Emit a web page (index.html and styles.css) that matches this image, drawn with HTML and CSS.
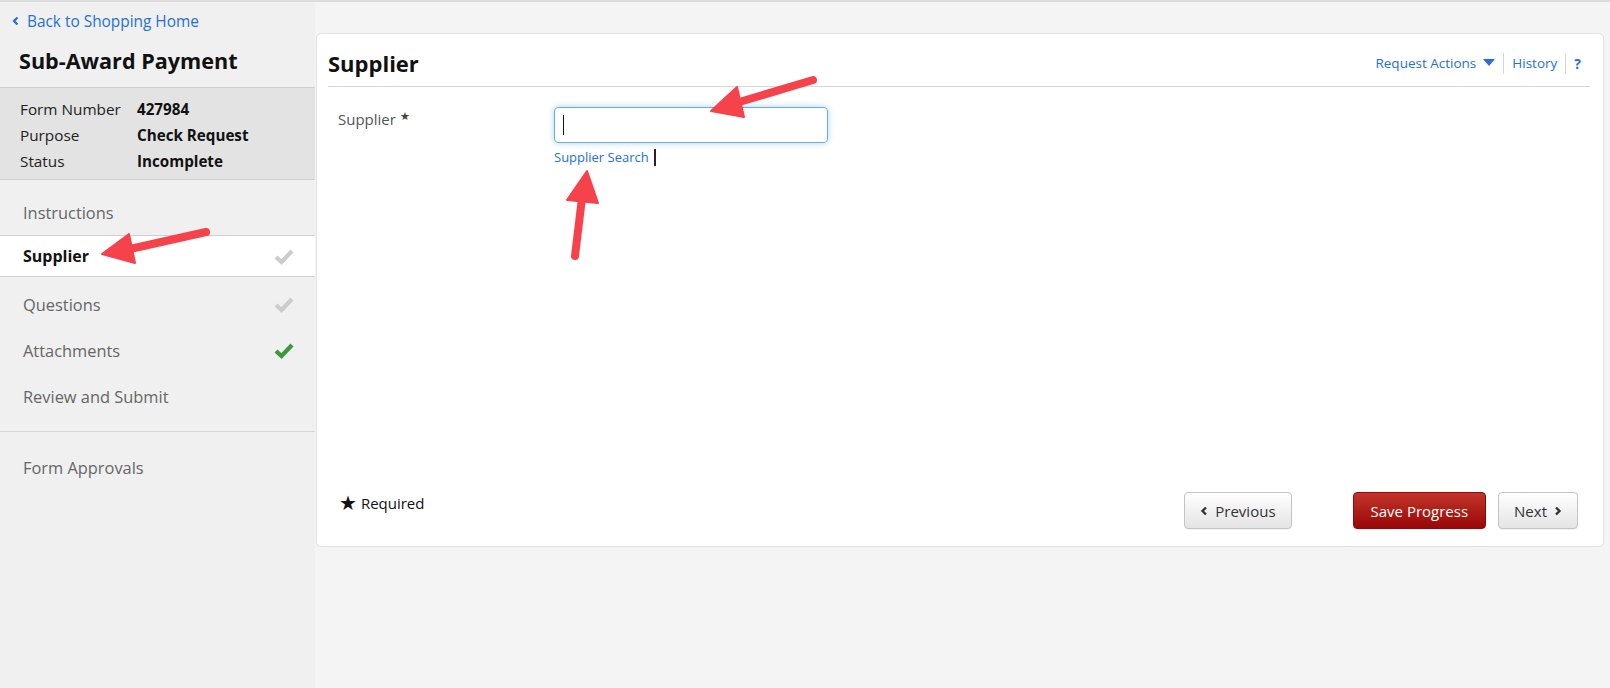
FILE: index.html
```html
<!DOCTYPE html>
<html lang="en">
<head>
    <meta charset="UTF-8">
    <meta name="viewport" content="width=device-width, initial-scale=1.0">
    <title>Sub-Award Payment - Supplier</title>
    <link rel="stylesheet" href="styles.css">
</head>
<body>
    <div class="page">
        <div class="sidebar">
            <a class="back-link" href="#">
                <svg class="chev" width="7" height="10" viewBox="0 0 7 10"><path d="M5.5 1.5 L2 5 L5.5 8.5" fill="none" stroke="currentColor" stroke-width="2.2"/></svg>
                Back to Shopping Home
            </a>
            <h1 class="form-title">Sub-Award Payment</h1>
            <div class="form-info">
                <div class="info-row"><span class="info-label">Form Number</span><span class="info-value">427984</span></div>
                <div class="info-row"><span class="info-label">Purpose</span><span class="info-value">Check Request</span></div>
                <div class="info-row"><span class="info-label">Status</span><span class="info-value">Incomplete</span></div>
            </div>
            <div class="nav-group">
                <div class="nav-item">Instructions</div>
                <div class="nav-item active">Supplier
                    <svg class="check" width="20" height="17" viewBox="0 0 20 17"><path d="M2 9 L7.5 14 L18 3" fill="none" stroke="#cccccc" stroke-width="4.2"/></svg>
                </div>
                <div class="nav-item">Questions
                    <svg class="check" width="20" height="17" viewBox="0 0 20 17"><path d="M2 9 L7.5 14 L18 3" fill="none" stroke="#cccccc" stroke-width="4.2"/></svg>
                </div>
                <div class="nav-item">Attachments
                    <svg class="check" width="20" height="17" viewBox="0 0 20 17"><path d="M2 9 L7.5 14 L18 3" fill="none" stroke="#3a9a3a" stroke-width="4.2"/></svg>
                </div>
                <div class="nav-item">Review and Submit</div>
            </div>
            <div class="nav-group last">
                <div class="nav-item">Form Approvals</div>
            </div>
        </div>

        <div class="main">
            <div class="card">
                <div class="card-header">
                    <h2 class="card-title">Supplier</h2>
                    <div class="header-links">
                        <a href="#" class="hlink">Request Actions
                            <svg width="12" height="8" viewBox="0 0 12 8"><path d="M0 0 L12 0 L6 7 Z" fill="currentColor"/></svg>
                        </a>
                        <span class="hsep"></span>
                        <a href="#" class="hlink">History</a>
                        <span class="hsep"></span>
                        <a href="#" class="hlink help">?</a>
                    </div>
                </div>

                <div class="form-row">
                    <div class="field-label">Supplier <span class="req">&#9733;</span></div>
                    <div class="field">
                        <div class="text-input"><span class="caret"></span></div>
                        <div class="field-links">
                            <a href="#" class="small-link">Supplier Search</a>
                            <span class="bar"></span>
                        </div>
                    </div>
                </div>

                <div class="card-footer">
                    <div class="required-note"><span class="req-star">&#9733;</span> Required</div>
                    <div class="buttons">
                        <button class="btn">
                            <svg width="8" height="10" viewBox="0 0 8 10"><path d="M6 1.5 L2.5 5 L6 8.5" fill="none" stroke="currentColor" stroke-width="2.4"/></svg>
                            Previous
                        </button>
                        <button class="btn btn-save">Save Progress</button>
                        <button class="btn">Next
                            <svg width="8" height="10" viewBox="0 0 8 10"><path d="M2 1.5 L5.5 5 L2 8.5" fill="none" stroke="currentColor" stroke-width="2.4"/></svg>
                        </button>
                    </div>
                </div>
            </div>
        </div>
    </div>

    <!-- annotation arrows drawn over the page -->
    <svg class="annotations" width="1610" height="688" viewBox="0 0 1610 688">
        <g fill="#f6424a" stroke="#f6424a" stroke-linecap="round" stroke-linejoin="round">
            <line x1="813" y1="80" x2="736" y2="103" stroke-width="8"/>
            <polygon points="711,111 737,87 744,117" stroke-width="2"/>
            <line x1="575" y1="256" x2="582" y2="198" stroke-width="8"/>
            <polygon points="587,171 567,200 598,203" stroke-width="2"/>
            <line x1="206" y1="232" x2="130" y2="249" stroke-width="8"/>
            <polygon points="102,254 129,234 135,263" stroke-width="2"/>
        </g>
    </svg>
</body>
</html>
```

FILE: styles.css
```css
body {
    margin: 0;
    font-family: "Open Sans", "Noto Sans", sans-serif;
    font-size: 15px;
    color: #222;
    background: #f4f4f4;
}
a {
    text-decoration: none;
}
.page {
    display: flex;
    min-height: 688px;
    border-top: 2px solid #dcdcdc;
    box-sizing: border-box;
}
.sidebar {
    width: 315px;
    flex-shrink: 0;
    background: #f0f0f0;
}
.back-link {
    display: flex;
    align-items: center;
    gap: 8px;
    height: 38px;
    padding-left: 12px;
    font-size: 15.4px;
    color: #2470d8;
}
.form-title {
    margin: 0;
    padding: 6px 0 0 19px;
    height: 41px;
    font-size: 21.6px;
    font-weight: 700;
    color: #111;
}
.form-info {
    background: #e3e3e3;
    border-top: 1px solid #cfcfcf;
    border-bottom: 1px solid #cfcfcf;
    padding: 8px 0 5px 20px;
    font-size: 15.3px;
}
.info-row {
    display: flex;
    height: 26px;
    line-height: 26px;
}
.info-label {
    width: 117px;
}
.info-value {
    font-weight: 700;
    font-size: 15.2px;
    color: #111;
}
.nav-group {
    padding: 9px 0 12px;
    border-bottom: 1px solid #d6d6d6;
}
.nav-group.last {
    border-bottom: none;
    padding-top: 12px;
}
.nav-item {
    display: flex;
    align-items: center;
    justify-content: space-between;
    height: 46px;
    padding: 0 21px 0 23px;
    font-size: 16.4px;
    color: #666;
}
.nav-item.active {
    box-sizing: border-box;
    height: 42px;
    margin-bottom: 4px;
    background: #fff;
    border-top: 1px solid #d0d0d0;
    border-bottom: 1px solid #d0d0d0;
    font-weight: 700;
    font-size: 16px;
    color: #111;
}
.main {
    flex: 1;
    padding: 31px 6px 0 1px;
}
.card {
    background: #fff;
    border: 1px solid #e2e2e2;
    border-radius: 5px;
    height: 514px;
    box-sizing: border-box;
    padding: 0 13px 0 11px;
    display: flex;
    flex-direction: column;
}
.card-header {
    display: flex;
    align-items: center;
    justify-content: space-between;
    height: 52px;
    border-bottom: 1px solid #d8d8d8;
}
.card-title {
    margin: 6px 0 0;
    font-size: 22px;
    font-weight: 700;
    color: #111;
}
.header-links {
    display: flex;
    align-items: center;
    margin-top: 6px;
    padding-right: 9px;
}
.hlink {
    display: flex;
    align-items: center;
    gap: 7px;
    color: #2470d8;
    font-size: 13.5px;
}
.help {
    font-weight: 700;
    font-size: 14px;
}
.hsep {
    width: 1px;
    height: 21px;
    background: #d6d6d6;
    margin: 0 8px;
}
.form-row {
    display: flex;
    padding-top: 18px;
}
.field-label {
    width: 216px;
    padding: 0 0 0 10px;
    font-size: 15px;
    color: #555;
    line-height: 22px;
}
.req {
    font-size: 11px;
    vertical-align: 5px;
    color: #444;
}
.field {
    padding-top: 2px;
}
.text-input {
    box-sizing: border-box;
    width: 274px;
    height: 36px;
    border: 1px solid #66afe9;
    border-radius: 4px;
    box-shadow: 0 0 6px rgba(102, 175, 233, 0.55);
    padding: 7px 0 0 8px;
}
.caret {
    display: block;
    width: 1px;
    height: 20px;
    background: #111;
}
.field-links {
    display: flex;
    align-items: center;
    gap: 5px;
    margin-top: 5px;
}
.small-link {
    font-size: 13px;
    color: #2470d8;
}
.bar {
    width: 2px;
    height: 17px;
    background: #3a1a2a;
}
.card-footer {
    margin-top: auto;
    display: flex;
    align-items: flex-start;
    justify-content: space-between;
    margin-bottom: 17px;
}
.required-note {
    padding: 1px 0 0 11px;
    font-size: 15px;
    line-height: 20px;
    color: #111;
}
.req-star {
    font-size: 20px;
    vertical-align: -1px;
}
.buttons {
    display: flex;
    gap: 12px;
    padding-right: 12px;
}
.btn {
    display: flex;
    align-items: center;
    gap: 7px;
    height: 37px;
    padding: 0 15px;
    font-family: "Open Sans", "Noto Sans", sans-serif;
    font-size: 15px;
    color: #333;
    background: linear-gradient(to bottom, #ffffff, #e4e4e4);
    border: 1px solid #c4c4c4;
    border-radius: 4px;
    box-shadow: 0 1px 1px rgba(0, 0, 0, 0.05);
}
.btn-save {
    margin-left: 49px;
    padding: 0 17px;
    color: #fff;
    background: linear-gradient(to bottom, #c2352a, #990707);
    border-color: #8c0a0a;
}
.annotations {
    position: absolute;
    left: 0;
    top: 0;
    pointer-events: none;
}
```
